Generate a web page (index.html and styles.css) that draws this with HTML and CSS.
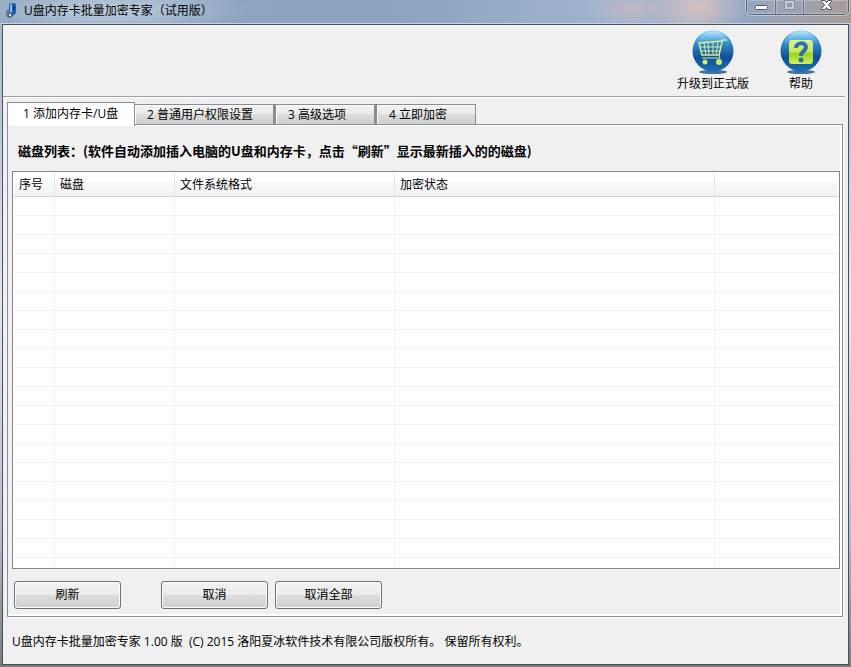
FILE: index.html
```html
<!DOCTYPE html>
<html lang="zh-CN">
<head>
    <meta charset="UTF-8">
    <meta name="viewport" content="width=device-width, initial-scale=1">
    <title>U盘内存卡批量加密专家（试用版）</title>
    <link rel="stylesheet" href="styles.css">
</head>
<body>
<div class="window">
    <header class="titlebar">
        <svg class="app-icon" width="12" height="16" viewBox="0 0 12 16">
            <path d="M3 2l5-1 2 1v9l-3 3-4-1z" fill="#1f5fb4"/>
            <path d="M4 3l2-1v8l-2 1z" fill="#7fc0f4"/>
            <path d="M7 4h2v4H7z" fill="#0d3578"/>
            <path d="M0 8l3-1v7l-2 1-1-2z" fill="#6f7f8f"/>
            <path d="M2 11h4l1 3-3 2-3-1z" fill="#56616d"/>
            <path d="M3 12h2v2H3z" fill="#dfe6ec"/>
        </svg>
        <h1 class="title">U盘内存卡批量加密专家（试用版）</h1>
        <div class="window-buttons">
            <button type="button" class="win-btn" aria-label="最小化">
                <svg width="13" height="13" viewBox="0 0 13 13"><rect x=".5" y="5.500" width="12" height="4" rx="1" fill="#fff" stroke="#555a69"/></svg>
            </button>
            <button type="button" class="win-btn" aria-label="最大化" disabled>
                <svg width="13" height="13" viewBox="0 0 13 13"><path d="M1.500 .5h10v9h-10zM4.500 3.500h4v3h-4z" fill="#c5cbd8" fill-rule="evenodd" stroke="#8791a4"/></svg>
            </button>
            <button type="button" class="win-btn close" aria-label="关闭">
                <svg width="13" height="13" viewBox="0 0 13 13"><path d="M1.500 .5h3l2 2 2-2h3v1L8.500 5l3 3.500v1h-3l-2-2-2 2h-3v-1l3-3.500-3-3.500z" fill="#fff" stroke="#4e505c"/></svg>
            </button>
        </div>
    </header>

    <main class="client">
        <div class="toolbar">
            <button type="button" class="tool">
                <svg width="44" height="44" viewBox="0 0 44 44">
                    <defs>
                        <linearGradient id="ball" x1="0" y1="0" x2="0" y2="1">
                            <stop offset="0" stop-color="#62bdec"/>
                            <stop offset=".35" stop-color="#2f86c2"/>
                            <stop offset=".65" stop-color="#0f4f96"/>
                            <stop offset="1" stop-color="#1a70b2"/>
                        </linearGradient>
                        <linearGradient id="gloss" x1="0" y1="0" x2="0" y2="1">
                            <stop offset="0" stop-color="#b9e8ff"/>
                            <stop offset="1" stop-color="#51a9dc" stop-opacity=".3"/>
                        </linearGradient>
                        <linearGradient id="lime" x1="0" y1="0" x2="0" y2="1">
                            <stop offset="0" stop-color="#e4f296"/>
                            <stop offset=".5" stop-color="#c5e657"/>
                            <stop offset=".55" stop-color="#98d018"/>
                            <stop offset="1" stop-color="#d3f05c"/>
                        </linearGradient>
                    </defs>
                    <ellipse cx="22" cy="42" rx="14" ry="2" fill="#456f9d"/>
                    <circle cx="22" cy="21" r="20.500" fill="url(#ball)"/>
                    <path d="M5 14C8 5 14 1 22 1s14 4 17 13C33 10 28 11 22 12S10 12 5 14z" fill="url(#gloss)"/>
                    <g fill="none" stroke="#d5eda0">
                        <path d="M35.500 10h-4L28 25H11L8 13l23-2" stroke-width="1.500"/>
                        <path d="M13 13l2 12M17 12.500l1 12.500M22 12v13M27 11.500L25 25M9 17h21M10 21h19M28 25l1 3H11"/>
                    </g>
                    <circle cx="14" cy="32" r="2.500" fill="#cbee63"/>
                    <circle cx="28" cy="32" r="3" fill="#cbee63"/>
                </svg>
                <span>升级到正式版</span>
            </button>
            <button type="button" class="tool">
                <svg width="44" height="44" viewBox="0 0 44 44">
                    <ellipse cx="22" cy="42" rx="14" ry="2" fill="#456f9d"/>
                    <circle cx="22" cy="21" r="20.500" fill="url(#ball)"/>
                    <path d="M5 14C8 5 14 1 22 1s14 4 17 13C33 10 28 11 22 12S10 12 5 14z" fill="url(#gloss)"/>
                    <rect x="10" y="10" width="24" height="24" rx="3" fill="url(#lime)"/>
                    <path d="M17 18c0-6 10-6 10-1 0 4-5 4-5 9" fill="none" stroke="#2872aa" stroke-width="4"/>
                    <circle cx="22" cy="30" r="2.500" fill="#2872aa"/>
                </svg>
                <span>帮助</span>
            </button>
        </div>

        <div class="tabs" role="tablist">
            <button type="button" class="tab active" role="tab" aria-selected="true">1 添加内存卡/U盘</button>
            <button type="button" class="tab wide" role="tab">2 普通用户权限设置</button>
            <button type="button" class="tab" role="tab">3 高级选项</button>
            <button type="button" class="tab" role="tab">4 立即加密</button>
        </div>

        <section class="panel">
            <h2 class="caption">磁盘列表：(软件自动添加插入电脑的U盘和内存卡，点击“刷新”显示最新插入的的磁盘)</h2>
            <div class="list">
                <table class="disks">
                    <colgroup>
                        <col class="col-no"><col class="col-disk"><col class="col-fs"><col class="col-state"><col>
                    </colgroup>
                    <thead>
                        <tr><th>序号</th><th>磁盘</th><th>文件系统格式</th><th>加密状态</th><th></th></tr>
                    </thead>
                    <tbody id="rows"></tbody>
                </table>
            </div>
            <div class="actions">
                <button type="button" class="btn refresh">刷新</button>
                <button type="button" class="btn">取消</button>
                <button type="button" class="btn">取消全部</button>
            </div>
        </section>

        <footer class="copyright">U盘内存卡批量加密专家 1.00 版&nbsp; (C) 2015 洛阳夏冰软件技术有限公司版权所有。&nbsp;保留所有权利。</footer>
    </main>
</div>
<script src="script.js"></script>
</body>
</html>
```
FILE: styles.css
```css
:root {
    --face: #f0f0f0;
    --line: #898c95;
    --grid: #f0f0f0;
}
* { margin: 0; padding: 0; box-sizing: border-box; }
body {
    font-family: "Open Sans", "Noto Sans CJK SC", sans-serif;
    font-size: 12px;
    line-height: 16px;
    color: #000;
}
button {
    font: inherit;
    color: inherit;
    border: none;
    background: none;
}
.window {
    height: 100vh;
    min-height: 400px;
    display: flex;
    flex-direction: column;
    padding: 0 2px 2px;
    background: linear-gradient(180deg, #a3b5ca 0%, #b7cbdc 20%, #dcebf2 45%, #aebfce 80%, #777b80 100%);
}

/* title bar */
.titlebar {
    flex: none;
    display: flex;
    align-items: flex-start;
    height: 24px;
    margin: 0 -2px;
    padding: 0 2px 0 6px;
    border-bottom: 1px solid #c8d2dd;
    background:
        radial-gradient(ellipse 140px 24px at 110px 10px, rgba(205, 217, 230, 0.8), transparent),
        radial-gradient(ellipse 50px 30px at 82% 30%, rgba(222, 196, 190, 0.9), transparent),
        radial-gradient(ellipse 44px 18px at 74% 40%, rgba(200, 185, 192, 0.8), transparent),
        linear-gradient(90deg, #8fa6bf, #8ba3bf 45%, #a1b6d0 75%, #93a9c6 86%, #a89c9c);
}
.app-icon { margin-top: 2px; }
.title {
    flex: 1;
    margin-left: 6px;
    font-size: 12px;
    font-weight: 400;
    line-height: 22px;
}
.window-buttons {
    display: flex;
    height: 15px;
    border: 1px solid #596477;
    border-top: none;
    border-radius: 0 0 5px 5px;
    box-shadow: 0 0 0 1px rgba(255, 255, 255, 0.4);
}
.win-btn {
    width: 28px;
    display: flex;
    justify-content: center;
    box-shadow: inset 0 0 0 1px rgba(255, 255, 255, 0.25);
}
.win-btn + .win-btn { border-left: 1px solid #6b7587; }
.win-btn.close { width: 45px; }

.client {
    flex: 1;
    min-height: 0;
    display: flex;
    flex-direction: column;
    border: 1px solid #4b5058;
    background: var(--face);
}

/* toolbar */
.toolbar {
    flex: none;
    display: flex;
    justify-content: flex-end;
    gap: 14px;
    height: 73px;
    margin-right: 3px;
    padding: 5px 7px 0 0;
    border-bottom: 1px solid #fff;
    box-shadow: inset 0 -1px #a0a0a0;
}
.tool {
    min-width: 74px;
    display: flex;
    flex-direction: column;
    align-items: center;
    gap: 2px;
}

/* tabs */
.tabs {
    flex: none;
    display: flex;
    align-items: flex-end;
    height: 26px;
    margin-left: 4px;
}
.tab {
    width: 101px;
    height: 21px;
    margin-bottom: -1px;
    padding-left: 12px;
    text-align: left;
    border: 1px solid var(--line);
    border-left-width: 2px;
    background: linear-gradient(#f2f2f2, #ebebeb 45%, #dddddd 50%, #cfcfcf);
    box-shadow: inset 1px 1px #fcfcfc;
}
.tab.wide {
    width: 139px;
    border-left: none;
}
.tab.active {
    width: 128px;
    height: 24px;
    margin-bottom: -2px;
    padding: 0 0 2px 15px;
    border-width: 1px 1px 0;
    background: #fff;
    z-index: 1;
}

/* page under the tabs */
.panel {
    flex: 1;
    min-height: 0;
    display: flex;
    flex-direction: column;
    margin: 0 5px 0 4px;
    border: 1px solid var(--line);
    box-shadow: 1px 1px #fff, inset 0 1px #fff, inset -2px -2px #fff;
    padding: 0 2px 7px 4px;
}
.caption {
    margin: 18px 0 12px 6px;
    font-family: "Noto Sans CJK SC", sans-serif;
    font-size: 13px;
    font-weight: 700;
    line-height: 16px;
}
.list {
    flex: 1;
    min-height: 0;
    overflow: hidden;
    padding: 1px;
    border: 1px solid #828790;
    background: #fff;
}
.disks {
    width: 100%;
    table-layout: fixed;
    border-collapse: separate;
    border-spacing: 0;
}
.col-no { width: 41px; }
.col-disk { width: 120px; }
.col-fs { width: 220px; }
.col-state { width: 320px; }
.disks th {
    height: 24px;
    padding-left: 5px;
    font-weight: 400;
    text-align: left;
    border-right: 1px solid #e2e4e6;
    border-bottom: 1px solid #d5d5d5;
    background: linear-gradient(#fff 40%, #f7f8fa 42%, #f1f2f4);
}
.disks td {
    height: 19px;
    border-right: 1px solid var(--grid);
    border-bottom: 1px solid var(--grid);
}
.disks th:last-child,
.disks td:last-child { border-right: none; }

.actions {
    flex: none;
    display: flex;
    gap: 7px;
    padding: 12px 0 0 2px;
}
.btn {
    width: 107px;
    height: 28px;
    border: 1px solid #707070;
    border-radius: 3px;
    background: linear-gradient(#f2f2f2, #ebebeb 48%, #dddddd 50%, #cfcfcf);
    box-shadow: inset 0 0 0 1px #fcfcfc;
}
.refresh { margin-right: 33px; }

.copyright {
    flex: none;
    padding: 17px 9px 14px;
}
```
FILE: script.js
```js
// empty grid lines of the disk list
const rows = document.getElementById('rows');
for (let i = 0; i < 20; i++) {
    const tr = rows.insertRow();
    for (let c = 0; c < 5; c++) {
        tr.insertCell();
    }
}
```
